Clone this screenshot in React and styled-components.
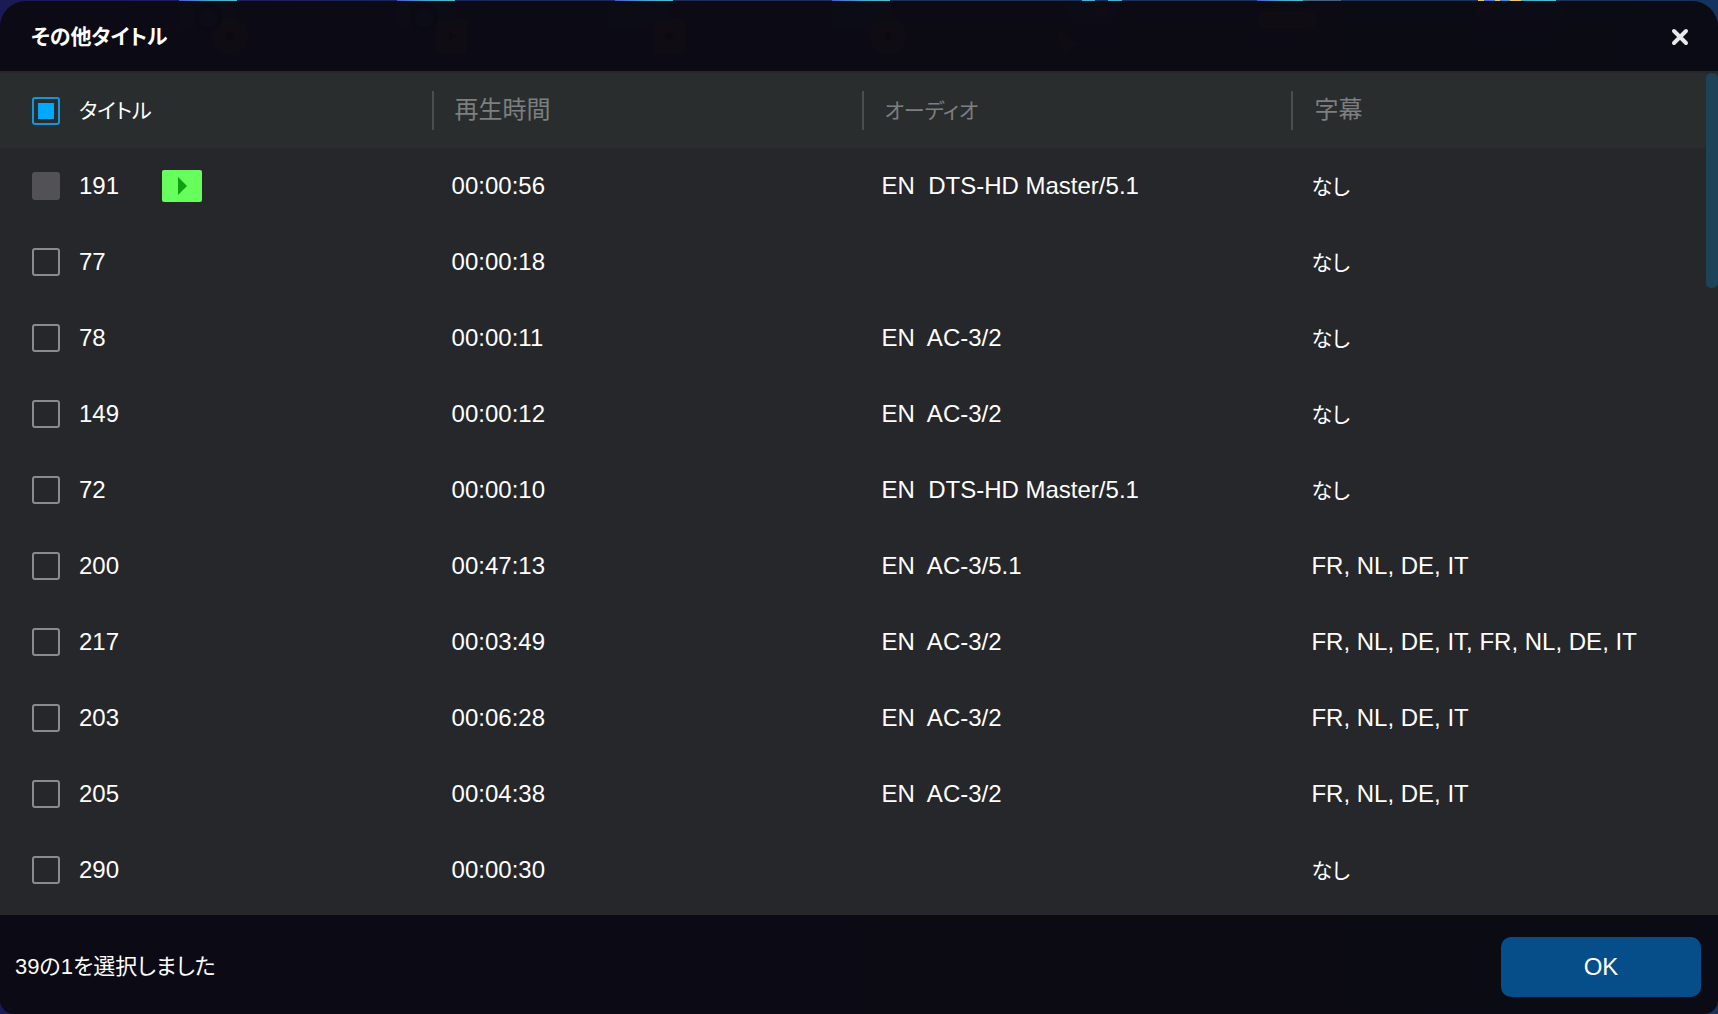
import { useState } from "react";
import styled, { createGlobalStyle } from "styled-components";

const titles = [
    { id: 191, time: "00:00:56", audio: "DTS-HD Master/5.1", playing: true },
    { id: 77, time: "00:00:18" },
    { id: 78, time: "00:00:11", audio: "AC-3/2" },
    { id: 149, time: "00:00:12", audio: "AC-3/2" },
    { id: 72, time: "00:00:10", audio: "DTS-HD Master/5.1" },
    { id: 200, time: "00:47:13", audio: "AC-3/5.1", subs: "FR, NL, DE, IT" },
    { id: 217, time: "00:03:49", audio: "AC-3/2", subs: "FR, NL, DE, IT, FR, NL, DE, IT" },
    { id: 203, time: "00:06:28", audio: "AC-3/2", subs: "FR, NL, DE, IT" },
    { id: 205, time: "00:04:38", audio: "AC-3/2", subs: "FR, NL, DE, IT" },
    { id: 290, time: "00:00:30" },
];

export default function App() {
    const [selected, setSelected] = useState([]);

    const toggle = (id) =>
        setSelected((ids) => (ids.includes(id) ? ids.filter((i) => i !== id) : [...ids, id]));

    return (
        <>
            <GlobalStyle />
            <Page>
                <Backdrop />
                <Dialog role="dialog" aria-labelledby="dialog-title">
                    <Header>
                        <DialogTitle id="dialog-title">その他タイトル</DialogTitle>
                        <CloseButton aria-label="閉じる">
                            <svg width="18" height="18" viewBox="0 0 18 18" aria-hidden="true">
                                <path d="M3 3 15 15M15 3 3 15" stroke="#e8e8ea" strokeWidth="4" strokeLinecap="round" />
                            </svg>
                        </CloseButton>
                    </Header>
                    <Body>
                        <Table>
                            <colgroup>
                                <Col $width="25.3%" />
                                <Col $width="25.2%" />
                                <Col $width="25.2%" />
                                <Col />
                            </colgroup>
                            <thead>
                                <tr>
                                    <HeadCell scope="col" $first>
                                        <TitleLabel>
                                            <Checkbox $partial />
                                            <Kana>タイトル</Kana>
                                        </TitleLabel>
                                    </HeadCell>
                                    <HeadCell scope="col"><Divided>再生時間</Divided></HeadCell>
                                    <HeadCell scope="col"><Divided><Kana>オーディオ</Kana></Divided></HeadCell>
                                    <HeadCell scope="col"><Divided>字幕</Divided></HeadCell>
                                </tr>
                            </thead>
                            <tbody>
                                {titles.map((t) => (
                                    <tr key={t.id}>
                                        <Cell $first>
                                            <TitleGroup>
                                                <TitleLabel>
                                                    <Checkbox
                                                        disabled={t.playing}
                                                        checked={selected.includes(t.id)}
                                                        onChange={() => toggle(t.id)}
                                                    />
                                                    {t.id}
                                                </TitleLabel>
                                                {t.playing && (
                                                    <PlayButton aria-label="再生">
                                                        <svg width="9" height="18" viewBox="0 0 9 18" aria-hidden="true">
                                                            <path d="M0 0 9 9 0 18Z" fill="#0fa00f" />
                                                        </svg>
                                                    </PlayButton>
                                                )}
                                            </TitleGroup>
                                        </Cell>
                                        <Cell>{t.time}</Cell>
                                        <Cell>{t.audio && `EN  ${t.audio}`}</Cell>
                                        <Cell>{t.subs || <Kana>なし</Kana>}</Cell>
                                    </tr>
                                ))}
                            </tbody>
                        </Table>
                        <ScrollTrack>
                            <ScrollThumb />
                        </ScrollTrack>
                    </Body>
                    <Footer>
                        <Status>39の1を選択しました</Status>
                        <OkButton>OK</OkButton>
                    </Footer>
                </Dialog>
            </Page>
        </>
    );
}

// Tool icons of the main window, which shine through the dialog header
const Backdrop = () => (
    <BackdropArt viewBox="0 0 1718 72" preserveAspectRatio="none" aria-hidden="true">
        <defs>
            <linearGradient id="edge" x1="0" x2="1">
                <stop offset="0" stopColor="#4a5fc4" />
                <stop offset="0.5" stopColor="#45a5cc" />
                <stop offset="1" stopColor="#4cc4d0" />
            </linearGradient>
            <linearGradient id="tile" x1="0" x2="0" y1="0" y2="1">
                <stop offset="0" stopColor="#1d5a8a" />
                <stop offset="1" stopColor="#1a2a60" />
            </linearGradient>
        </defs>
        {[178, 397, 608, 832].map((x) => (
            <rect key={x} x={x} y="1" width="59" height="50" fill="url(#tile)" />
        ))}
        <path d="M1062 1H1120L1104 44H1082Z" fill="url(#tile)" />
        <rect x="1257" y="34" width="40" height="12" fill="#1a2a60" />
        <rect x="1476" y="1" width="86" height="34" rx="8" fill="url(#tile)" />

        {[179, 397, 615, 832].map((x) => (
            <rect key={x} x={x} width="58" height="1" fill="url(#edge)" />
        ))}
        <path d="M1082 0H1095V1H1082ZM1108 0H1122V1H1108Z" fill="#48b0d0" />
        <rect x="1257" width="46" height="1" fill="url(#edge)" />
        <rect x="1303" width="38" height="1" fill="#4a5f7c" />
        <rect x="1478" width="78" height="1" fill="url(#edge)" />
        <path d="M1478 0H1484V1H1478ZM1495 0H1500V1H1495ZM1510 0H1521V1H1510Z" fill="#e8c86a" />

        <g fill="#6b5530">
            <circle cx="230" cy="36" r="18" />
            <rect x="436" y="19" width="31" height="35" rx="3" />
            <rect x="654" y="19" width="31" height="35" rx="3" />
            <circle cx="888" cy="36" r="18" />
            <circle cx="1101" cy="8" r="7" />
            <path d="M1058 30 1077 44 1066 52 1057 44Z" />
            <rect x="1257" y="12" width="60" height="16" rx="8" />
            <path d="M1478 6 1506 3 1476 16Z" />
        </g>
        <g fill="#101020">
            <circle cx="230" cy="36" r="4" />
            <path d="M449 31 457 36 449 41Z" />
            <circle cx="669" cy="36" r="4" />
            <circle cx="888" cy="36" r="4" />
        </g>
        <g fill="none" stroke="#101020" strokeWidth="5">
            <circle cx="208" cy="18" r="12" />
            <circle cx="424" cy="18" r="12" />
        </g>
    </BackdropArt>
);

const Checkbox = ({ $partial, ...props }) => (
    <Box
        type="checkbox"
        $partial={$partial}
        ref={(el) => {
            if (el) el.indeterminate = Boolean($partial);
        }}
        {...props}
    />
);

const GlobalStyle = createGlobalStyle`
    *, *::before, *::after {
        box-sizing: border-box;
    }

    body {
        margin: 0;
        background: #1a1a5a;
        color: #ffffff;
        font-family: "Liberation Sans", "Noto Sans CJK JP", sans-serif;
        font-size: 24px;
        line-height: 32px;
    }

    button {
        padding: 0;
        border: 0;
        color: inherit;
        font: inherit;
        cursor: pointer;
    }
`;

const Page = styled.main`
    position: relative;
    display: flex;
    min-height: 100vh;
    padding-top: 1px;
    background: linear-gradient(90deg, #1a1a56, #1d2f5c 50%, #14335e);
`;

const BackdropArt = styled.svg`
    position: absolute;
    top: 0;
    left: 0;
    width: 100%;
    height: 72px;
`;

const Dialog = styled.section`
    position: relative;
    display: flex;
    flex: 1;
    flex-direction: column;
    min-width: 0;
    border-radius: 26px 26px 14px 14px;
    background: rgba(11, 9, 18, 0.96);
    overflow: hidden;
`;

const Header = styled.header`
    display: flex;
    align-items: center;
    justify-content: space-between;
    height: 70px;
    padding: 2px 29px 0 31px;
`;

const DialogTitle = styled.h1`
    margin: 0;
    font-size: 21px;
    font-weight: 700;
    font-feature-settings: "palt";
`;

const CloseButton = styled.button`
    display: flex;
    background: none;
`;

const Body = styled.div`
    display: flex;
    flex: 1;
    align-items: flex-start;
    padding-top: 2px;
    background: #26272b;
`;

const Table = styled.table`
    flex: 1;
    min-width: 0;
    border-collapse: collapse;
    table-layout: fixed;
`;

const Col = styled.col`
    width: ${({ $width }) => $width || "auto"};
`;

const HeadCell = styled.th`
    height: 75px;
    padding: 0 0 0 ${({ $first }) => ($first ? "32px" : "0")};
    background: #2a2d2e;
    color: ${({ $first }) => ($first ? "#ffffff" : "#7d7f80")};
    font-weight: 400;
    text-align: left;
`;

const Divided = styled.div`
    height: 39px;
    padding-left: 21px;
    border-left: 2px solid #4b4d4f;
    line-height: 38px;
`;

const Cell = styled.td`
    height: 76px;
    padding: 0 0 0 ${({ $first }) => ($first ? "32px" : "20px")};
    white-space: pre;
`;

const Kana = styled.span`
    font-size: 21px;
    font-feature-settings: "palt";
`;

const TitleGroup = styled.div`
    display: flex;
    align-items: center;
`;

const TitleLabel = styled.label`
    display: flex;
    align-items: center;
    gap: 19px;
    min-width: 130px;
`;

const Box = styled.input`
    display: grid;
    place-items: center;
    flex: none;
    width: 28px;
    height: 28px;
    margin: 0;
    border: 2px solid ${({ $partial }) => ($partial ? "#1596d8" : "#8b8b8f")};
    border-radius: 3px;
    appearance: none;

    &:disabled {
        border-color: #525156;
        background: #525156;
    }

    &:checked::before,
    &:indeterminate::before {
        content: "";
        width: 16px;
        height: 16px;
        background: #00a8ff;
    }
`;

const PlayButton = styled.button`
    display: flex;
    align-items: center;
    justify-content: center;
    width: 40px;
    height: 32px;
    border-radius: 2px;
    background: #66ff5c;
`;

const ScrollTrack = styled.div`
    align-self: stretch;
    width: 12px;
`;

const ScrollThumb = styled.div`
    height: 215px;
    border-radius: 5px;
    background: #1e4258;
`;

const Footer = styled.footer`
    display: flex;
    align-items: center;
    justify-content: space-between;
    height: 99px;
    padding: 5px 17px 0 15px;
`;

const Status = styled.p`
    margin: 0;
    font-size: 22px;
    font-feature-settings: "palt";
`;

const OkButton = styled.button`
    width: 200px;
    height: 60px;
    border-radius: 10px;
    background: #064e89;
`;
